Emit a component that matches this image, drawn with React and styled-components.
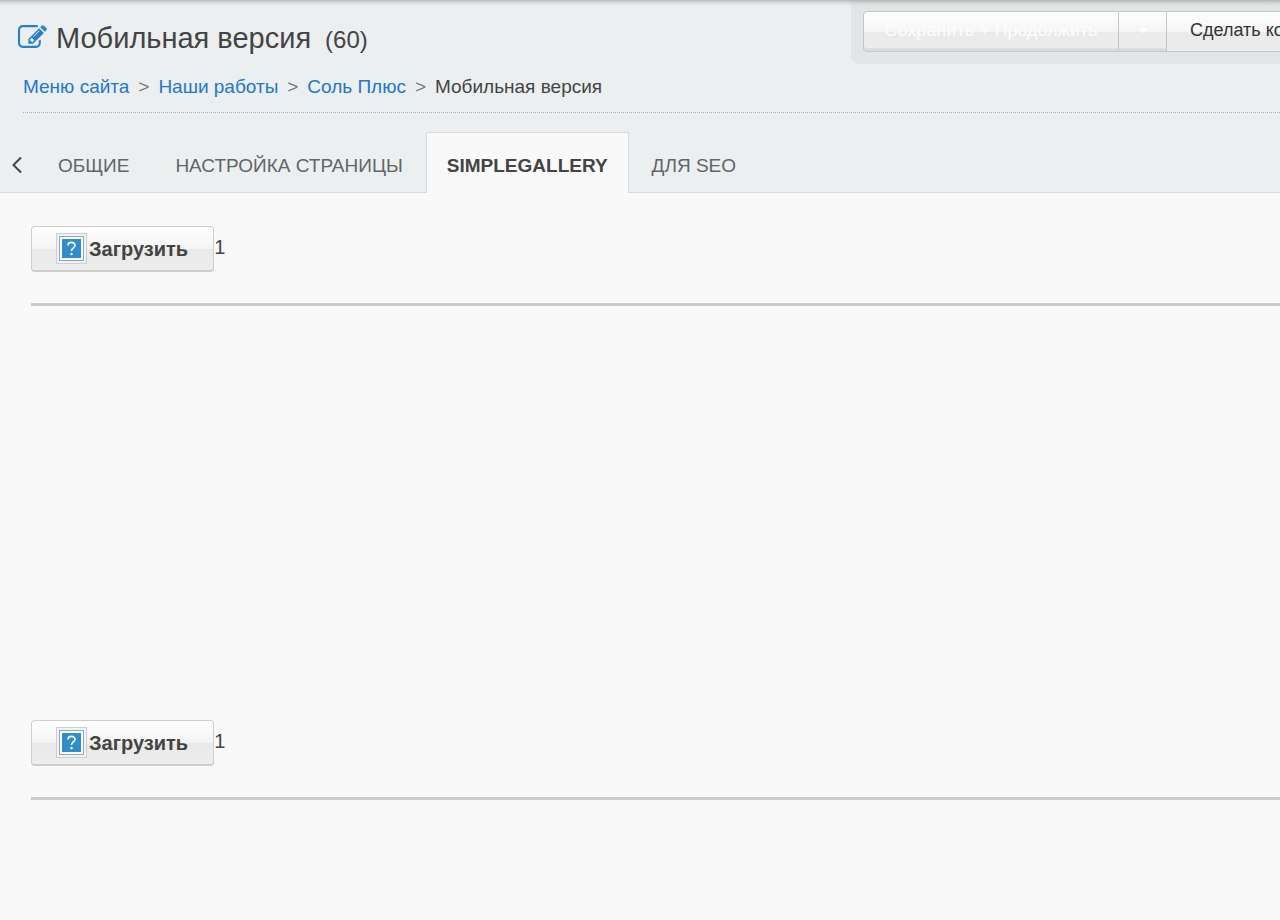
import React, { useState } from "react";
import styled, { createGlobalStyle } from "styled-components";

const GlobalStyle = createGlobalStyle`
  *, *::before, *::after { box-sizing: border-box; }
  body {
    margin: 0;
    background: #f9f9f9;
    color: #444;
    font-family: "Liberation Sans", Arial, Helvetica, sans-serif;
    overflow-x: hidden;
  }
  button { font-family: inherit; cursor: pointer; }
`;

const Header = styled.header`
  background: linear-gradient(#b9bcbd, #d9dddd 3px, #ebeff0 6px);
`;

const TopRow = styled.div`
  display: flex;
  justify-content: space-between;
  align-items: flex-start;
  height: 74px;
`;

const Title = styled.h1`
  display: flex;
  align-items: center;
  margin: 0;
  padding: 20px 0 0 18px;
  font-size: 29px;
  line-height: 36px;
  font-weight: 400;
  white-space: nowrap;
`;

const EditIcon = styled.svg`
  width: 29px;
  height: 23px;
  margin: 0 9px 4px 0;
  fill: #2a80c8;
`;

const PageId = styled.small`
  margin-left: 14px;
  padding-top: 4px;
  font-size: 24px;
  line-height: 32px;
`;

const Toolbar = styled.div`
  display: flex;
  flex: 0 0 429px;
  padding: 11px 0 12px 12px;
  overflow: hidden;
  border-bottom-left-radius: 8px;
  background: linear-gradient(#b4b7b7, #d3d6d6 3px, #e1e5e5 6px);
`;

const ToolButton = styled.button`
  display: flex;
  flex: none;
  justify-content: center;
  align-items: flex-start;
  width: ${(p) => p.$width || "auto"};
  height: 41px;
  margin: 0;
  padding: 8px 23px 0;
  border: 1px solid #c6c6c6;
  border-left-width: ${(p) => (p.$first ? "1px" : "0")};
  border-radius: ${(p) => (p.$first ? "4px 0 0 4px" : "0")};
  background: linear-gradient(#ffffff, #f5f5f5 50%, #eaeaea 51%, #ececec);
  box-shadow: ${(p) => (p.$primary ? "inset 0 -3px 0 #dcdcdc" : "none")};
  color: ${(p) => (p.$primary ? "#fdfdfd" : "#333")};
  font-size: 18px;
  line-height: 20px;
  white-space: nowrap;
`;

const Caret = styled.span`
  margin-top: 8px;
  border: 5px solid transparent;
  border-top-color: #fff;
  border-bottom: 0;
`;

const Breadcrumbs = styled.nav`
  display: flex;
  height: 39px;
  margin-left: 23px;
  border-bottom: 1px dotted #a9adae;
  font-size: 19px;
  line-height: 26px;
  white-space: nowrap;
`;

const Crumb = styled.a`
  color: #2277cf;
  text-decoration: none;
`;

const Separator = styled.span`
  width: 29px;
  text-align: center;
  color: #777;
`;

const TabBar = styled.div`
  display: flex;
  align-items: flex-end;
  margin-top: 19px;
  border-bottom: 1px solid #d8dbdc;
`;

const BackButton = styled.button`
  display: flex;
  align-items: center;
  width: 35px;
  height: 60px;
  padding: 6px 0 0 11px;
  border: 0;
  background: none;

  svg {
    fill: none;
    stroke: #444;
    stroke-width: 2;
  }
`;

const Tab = styled.button`
  height: 61px;
  margin-bottom: -1px;
  padding: 5px ${(p) => (p.$active ? "20px" : "22px")} 0;
  border: 1px solid ${(p) => (p.$active ? "#d8dbdc" : "transparent")};
  border-bottom: 0;
  background: ${(p) => (p.$active ? "#f9f9f9" : "none")};
  color: ${(p) => (p.$active ? "#444" : "#626566")};
  font-size: 19px;
  line-height: 24px;
  font-weight: ${(p) => (p.$active ? 700 : 400)};
  text-transform: uppercase;
  white-space: nowrap;
`;

const Content = styled.main`
  padding: 33px 0 0 31px;
`;

const GalleryField = styled.section`
  display: flex;
  align-items: flex-start;
  height: 80px;
  margin-bottom: 414px;
  border-bottom: 3px solid #cbcbcb;

  &:last-child { margin-bottom: 0; }
`;

const UploadButton = styled.button`
  display: flex;
  align-items: center;
  height: 46px;
  padding: 0 25px 0 24px;
  border: 2px solid #cdcdcd;
  border-width: 1px 1px 2px 1px;
  border-radius: 4px;
  background: linear-gradient(#ffffff, #f4f4f4 50%, #e9e9e9 51%, #ededed);
  color: #444;
  font-size: 20px;
  line-height: 24px;
  font-weight: 700;
`;

const UploadLabel = styled.span`
  margin-left: 2px;
`;

const Placeholder = styled.svg`
  width: 31px;
  height: 31px;
`;

const Count = styled.span`
  font-size: 20px;
  line-height: 42px;
`;

const tabs = ["Общие", "Настройка страницы", "SimpleGallery", "Для SEO"];
const parents = ["Меню сайта", "Наши работы", "Соль Плюс"];

function MissingImage() {
  return (
    <Placeholder viewBox="0 0 31 31" aria-hidden="true">
      <rect x="0.5" y="0.5" width="30" height="30" fill="#f1f3f5" stroke="#cdd0d3" />
      <rect x="3.5" y="3.5" width="24" height="24" fill="#fff" stroke="#88aac6" />
      <rect x="6" y="6" width="19" height="19" fill="#2f8dc8" />
      <path
        d="M12 12.4C12 8.4 19 8.3 19 12.2C19 14.9 15.5 15 15.5 18"
        fill="none"
        stroke="#fff"
        strokeWidth="1.6"
      />
      <circle cx="15.5" cy="21" r="1.2" fill="#fff" />
    </Placeholder>
  );
}

function Gallery() {
  return (
    <GalleryField>
      <UploadButton type="button">
        <MissingImage />
        <UploadLabel>Загрузить</UploadLabel>
      </UploadButton>
      <Count>1</Count>
    </GalleryField>
  );
}

export default function App() {
  const [active, setActive] = useState("SimpleGallery");

  return (
    <>
      <GlobalStyle />
      <Header>
        <TopRow>
          <Title>
            <EditIcon viewBox="0 128 1792 1408" aria-hidden="true">
              <path d="M888 1184l116-116-152-152-116 116v56h96v96h56zm440-720q-16-16-33 1l-350 350q-17 17-1 33t33-1l350-350q17-17 1-33zm80 594v190q0 119-84.5 203.5t-203.5 84.5h-832q-119 0-203.5-84.5t-84.5-203.5v-832q0-119 84.5-203.5t203.5-84.5h832q63 0 117 25 15 7 18 23 3 17-9 29l-49 49q-14 14-32 8-23-6-45-6h-832q-66 0-113 47t-47 113v832q0 66 47 113t113 47h832q66 0 113-47t47-113v-126q0-13 9-22l64-64q15-15 35-7t20 29zm-96-738l288 288-672 672h-288v-288zm444 132l-92 92-288-288 92-92q28-28 68-28t68 28l152 152q28 28 28 68t-28 68z" />
            </EditIcon>
            Мобильная версия
            <PageId>(60)</PageId>
          </Title>
          <Toolbar>
            <ToolButton type="button" $primary $first $width="256px">
              Сохранить + Продолжить
            </ToolButton>
            <ToolButton type="button" $primary $width="48px" aria-label="Другие действия">
              <Caret />
            </ToolButton>
            <ToolButton type="button">Сделать копию</ToolButton>
          </Toolbar>
        </TopRow>
        <Breadcrumbs>
          {parents.map((name) => (
            <React.Fragment key={name}>
              <Crumb href="#">{name}</Crumb>
              <Separator>&gt;</Separator>
            </React.Fragment>
          ))}
          <span>Мобильная версия</span>
        </Breadcrumbs>
        <TabBar>
          <BackButton type="button" aria-label="Назад">
            <svg width="12" height="18" viewBox="0 0 12 18">
              <path d="M10 1.5L2.5 9L10 16.5" />
            </svg>
          </BackButton>
          {tabs.map((name) => (
            <Tab key={name} type="button" $active={name === active} onClick={() => setActive(name)}>
              {name}
            </Tab>
          ))}
        </TabBar>
      </Header>
      <Content>
        <Gallery />
        <Gallery />
      </Content>
    </>
  );
}
